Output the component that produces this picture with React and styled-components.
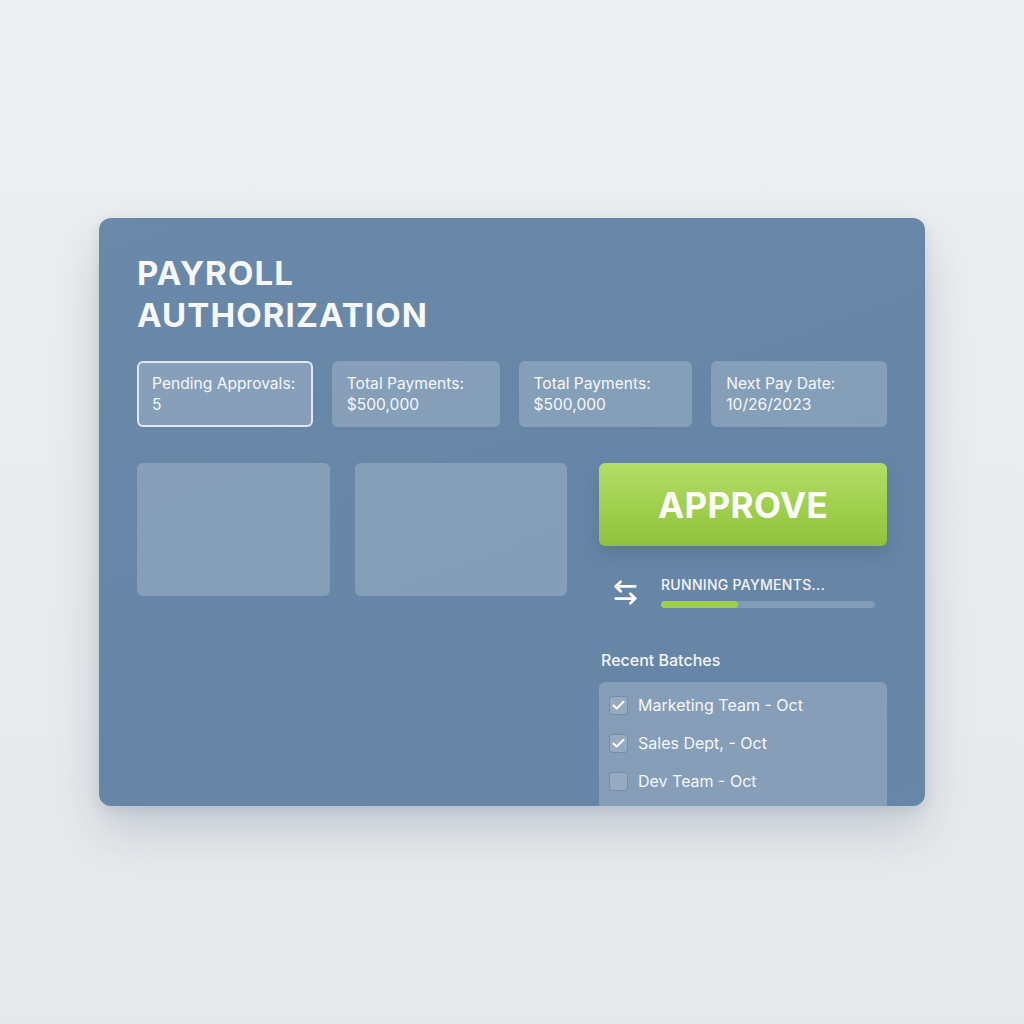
import React from "react";
import styled, { createGlobalStyle } from "styled-components";
import { ArrowLeftRight, Check } from "lucide-react";

const GlobalStyle = createGlobalStyle`
	html, body {
		margin: 0;
		padding: 0;
		background: #e8ebee;
	}
	body {
		font-family: Inter, "Noto Sans", sans-serif;
	}
`;

const Page = styled.div`
	width: 1024px;
	height: 1024px;
	display: flex;
	align-items: flex-start;
	justify-content: center;
	padding-top: 218px;
	box-sizing: border-box;
	background: linear-gradient(180deg, #edf0f2 0%, #e6e9ec 100%);
`;

const Card = styled.div`
	width: 826px;
	height: 588px;
	box-sizing: border-box;
	padding: 34px 38px 0 38px;
	border-radius: 12px;
	overflow: hidden;
	background: linear-gradient(160deg, #6a89a9 0%, #6786a7 60%, #6886a6 100%);
	box-shadow: 0 24px 50px rgba(60, 80, 110, 0.22), 0 4px 12px rgba(60, 80, 110, 0.12);
	color: #fff;
`;

const Title = styled.h1`
	margin: 0;
	font-size: 33px;
	line-height: 42px;
	font-weight: 700;
	letter-spacing: 1.1px;
	color: #f6f8fa;
`;

const StatsRow = styled.div`
	display: flex;
	gap: 19px;
	margin-top: 25px;
`;

const StatCard = styled.div`
	width: ${(p) => p.w}px;
	height: 66px;
	box-sizing: border-box;
	padding: 10px 13px;
	border-radius: 6px;
	background: rgba(255, 255, 255, 0.2);
	border: 2px solid ${(p) => (p.active ? "rgba(255,255,255,0.75)" : "transparent")};
	font-size: 15.6px;
	line-height: 21px;
	white-space: nowrap;
	color: #f4f7fa;
`;

const Body = styled.div`
	display: flex;
	gap: 32px;
	margin-top: 36px;
`;

const LeftCol = styled.div`
	display: flex;
	gap: 25px;
	width: 430px;
`;

const Placeholder = styled.div`
	width: ${(p) => p.w}px;
	height: 133px;
	border-radius: 6px;
	background: rgba(255, 255, 255, 0.2);
`;

const RightCol = styled.div`
	width: 288px;
	display: flex;
	flex-direction: column;
`;

const ApproveButton = styled.button`
	height: 83px;
	border: none;
	border-radius: 6px;
	background: linear-gradient(180deg, #b3de66 0%, #9fcf4c 55%, #8fc23c 100%);
	box-shadow: 0 8px 18px rgba(50, 70, 100, 0.25);
	color: #fff;
	font-family: Inter, sans-serif;
	font-size: 35px;
	font-weight: 700;
	letter-spacing: 0.4px;
	cursor: pointer;
`;

const StatusRow = styled.div`
	display: flex;
	align-items: center;
	gap: 21px;
	margin-top: 30px;
	padding-left: 12px;
`;

const StatusBody = styled.div`
	flex: 1;
	padding-right: 12px;
`;

const StatusLabel = styled.div`
	font-size: 14px;
	line-height: 18px;
	font-weight: 500;
	letter-spacing: 0.3px;
	color: #f2f5f8;
`;

const Track = styled.div`
	margin-top: 7px;
	height: 7px;
	border-radius: 4px;
	background: rgba(255, 255, 255, 0.18);
	overflow: hidden;
`;

const Fill = styled.div`
	height: 100%;
	border-radius: 4px;
	background: #9fd04b;
`;

const SectionTitle = styled.div`
	margin-top: 42px;
	padding-left: 2px;
	font-size: 16px;
	line-height: 20px;
	font-weight: 500;
	color: #f2f5f8;
`;

const BatchPanel = styled.div`
	margin-top: 12px;
	padding: 4px 10px 20px;
	border-radius: 6px;
	background: rgba(255, 255, 255, 0.2);
`;

const BatchRow = styled.div`
	display: flex;
	align-items: center;
	gap: 10px;
	height: 38px;
	font-size: 16px;
	color: #f4f7fa;
`;

const Box = styled.span`
	width: 19px;
	height: 19px;
	box-sizing: border-box;
	border-radius: 4px;
	border: 1.5px solid rgba(90, 118, 150, 0.55);
	background: rgba(255, 255, 255, 0.14);
	display: flex;
	align-items: center;
	justify-content: center;
`;

const stats = [
	{ label: "Pending Approvals:", value: "5", w: 176, active: true },
	{ label: "Total Payments:", value: "$500,000", w: 168 },
	{ label: "Total Payments:", value: "$500,000", w: 174 },
	{ label: "Next Pay Date:", value: "10/26/2023", w: 176 },
];

const batches = [
	{ name: "Marketing Team - Oct", done: true },
	{ name: "Sales Dept, - Oct", done: true },
	{ name: "Dev Team - Oct", done: false },
];

const App = () => {
	const progress = 36;
	return (
		<Page>
			<GlobalStyle />
			<Card>
				<Title>
					PAYROLL
					<br />
					AUTHORIZATION
				</Title>
				<StatsRow>
					{stats.map((s, i) => (
						<StatCard key={i} w={s.w} active={s.active}>
							<div>{s.label}</div>
							<div>{s.value}</div>
						</StatCard>
					))}
				</StatsRow>
				<Body>
					<LeftCol>
						<Placeholder w={193} />
						<Placeholder w={212} />
					</LeftCol>
					<RightCol>
						<ApproveButton>APPROVE</ApproveButton>
						<StatusRow>
							<ArrowLeftRight size={29} color="#fff" strokeWidth={2.3} />
							<StatusBody>
								<StatusLabel>RUNNING PAYMENTS...</StatusLabel>
								<Track>
									<Fill style={{ width: `${progress}%` }} />
								</Track>
							</StatusBody>
						</StatusRow>
						<SectionTitle>Recent Batches</SectionTitle>
						<BatchPanel>
							{batches.map((b) => (
								<BatchRow key={b.name}>
									<Box>{b.done && <Check size={15} color="#fff" strokeWidth={3.2} />}</Box>
									{b.name}
								</BatchRow>
							))}
						</BatchPanel>
					</RightCol>
				</Body>
			</Card>
		</Page>
	);
};

export default App;
